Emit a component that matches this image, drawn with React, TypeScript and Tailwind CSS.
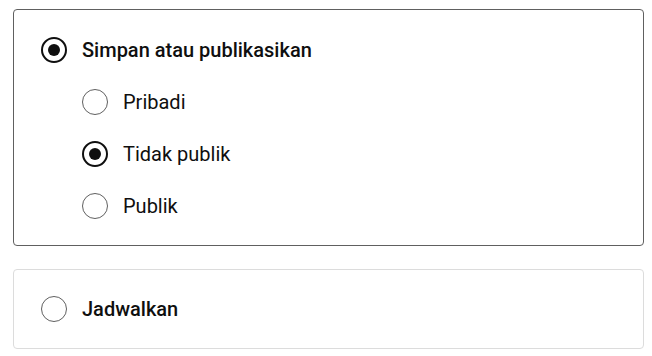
import { useState } from 'react'

type RadioProps = { checked: boolean; onClick?: () => void }

function Radio({ checked, onClick }: RadioProps) {
  return (
    <button
      type="button"
      onClick={onClick}
      className={
        checked
          ? 'flex h-[26px] w-[26px] shrink-0 items-center justify-center rounded-full border-[2.5px] border-[#0f0f0f]'
          : 'flex h-[26px] w-[26px] shrink-0 items-center justify-center rounded-full border-[1.5px] border-[#606060]'
      }
    >
      {checked && <span className="h-[12px] w-[12px] rounded-full bg-[#0f0f0f]" />}
    </button>
  )
}

const visibility = ['Pribadi', 'Tidak publik', 'Publik']

export default function App() {
  const [mode, setMode] = useState<'save' | 'schedule'>('save')
  const [vis, setVis] = useState('Tidak publik')

  return (
    <div
      className="flex h-[356px] w-[652px] flex-col gap-[23px] bg-white pl-[13px] pr-[8px] pt-[9px] text-[#0f0f0f]"
      style={{ fontFamily: 'Roboto, "Liberation Sans", sans-serif' }}
    >
      <div
        className={
          mode === 'save'
            ? 'flex flex-col gap-[26px] rounded-[4px] border border-[#606060] px-[27px] pt-[27px] pb-[26px]'
            : 'flex flex-col gap-[26px] rounded-[4px] border border-[#e0e0e0] px-[27px] pt-[27px] pb-[26px]'
        }
      >
        <label className="flex items-center gap-[15px]">
          <Radio checked={mode === 'save'} onClick={() => setMode('save')} />
          <span className="text-[20px] font-medium leading-[26px]">Simpan atau publikasikan</span>
        </label>
        {visibility.map(v => (
          <label key={v} className="flex items-center gap-[15px] pl-[41px]">
            <Radio checked={vis === v} onClick={() => setVis(v)} />
            <span className="text-[20px] leading-[26px]">{v}</span>
          </label>
        ))}
      </div>

      <div
        className={
          mode === 'schedule'
            ? 'flex h-[80px] items-center rounded-[4px] border border-[#606060] px-[27px]'
            : 'flex h-[80px] items-center rounded-[4px] border border-[#dcdcdc] px-[27px]'
        }
      >
        <label className="flex items-center gap-[15px]">
          <Radio checked={mode === 'schedule'} onClick={() => setMode('schedule')} />
          <span className="text-[20px] font-medium leading-[26px]">Jadwalkan</span>
        </label>
      </div>
    </div>
  )
}
